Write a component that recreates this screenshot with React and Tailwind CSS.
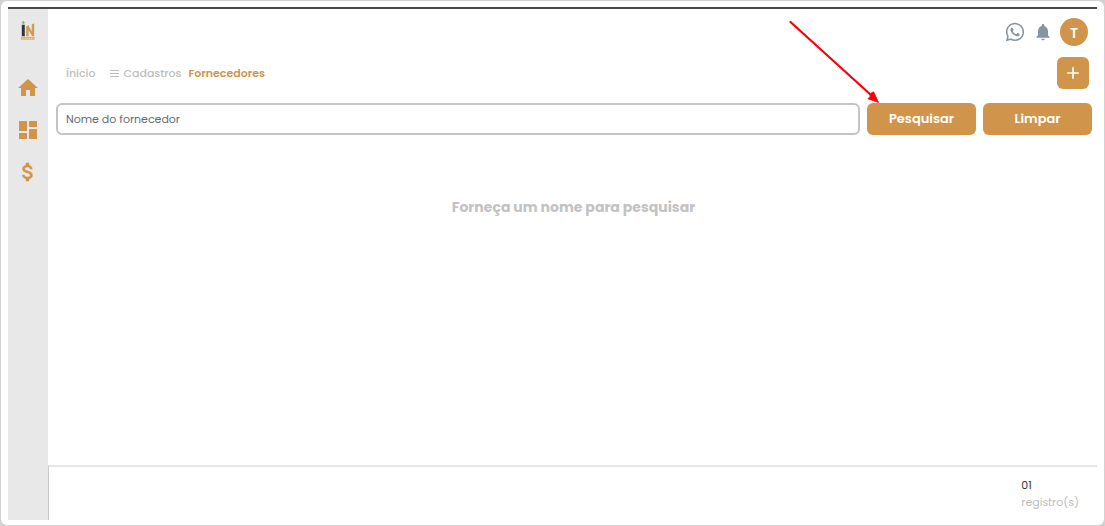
import { MdHome, MdDashboard, MdNotifications, MdWhatsapp, MdAdd } from "react-icons/md";

function Logo() {
  return (
    <svg viewBox="0 0 14 19" className="h-[19px] w-[14px]" aria-hidden="true">
      <path d="M2.3 0v3.2M0.8 1.6h3" stroke="#8fb583" strokeWidth="1.3" />
      <rect x="0.8" y="3.8" width="3" height="11.4" fill="#33343a" />
      <path d="M5.2 15.2V5.4L7.2 4L10.7 10.4V3.4L13.2 2.2V15.2H11.2L7.6 9.2V15.2z" fill="#cf9a55" />
      <rect x="0" y="15.9" width="13.6" height="2.8" fill="#d9ab70" />
      <path d="M1.4 17.3h11" stroke="#efdcc3" strokeWidth="0.9" strokeDasharray="1.4 0.7" />
    </svg>
  );
}

function Dollar({ className }) {
  return (
    <svg viewBox="0 0 24 24" className={className} fill="currentColor" stroke="currentColor" strokeWidth="0.5">
      <path d="M11.8 10.9c-2.27-.59-3-1.2-3-2.15 0-1.09 1.01-1.85 2.7-1.85 1.78 0 2.44.85 2.5 2.1h2.21c-.07-1.72-1.12-3.3-3.21-3.81V3h-3v2.16c-1.94.42-3.5 1.68-3.5 3.61 0 2.31 1.91 3.46 4.7 4.13 2.5.6 3 1.48 3 2.41 0 .69-.49 1.79-2.7 1.79-2.06 0-2.87-.92-2.98-2.1h-2.2c.12 2.19 1.76 3.42 3.68 3.83V21h3v-2.15c1.95-.37 3.5-1.5 3.5-3.55 0-2.84-2.43-3.81-4.7-4.4z" />
    </svg>
  );
}

function Sidebar() {
  const links = [
    { label: "Home", Icon: MdHome },
    { label: "Painel", Icon: MdDashboard },
    { label: "Financeiro", Icon: Dollar },
  ];
  return (
    <aside className="flex w-10 shrink-0 flex-col items-center bg-[#e8e8e8] pt-3">
      <Logo />
      <nav className="mt-9 flex flex-col gap-[18px]">
        {links.map(({ label, Icon }) => (
          <a key={label} href="#" aria-label={label} className="text-[#d0944a]">
            <Icon className="size-6" />
          </a>
        ))}
      </nav>
    </aside>
  );
}

function Arrow() {
  return (
    <svg
      viewBox="0 0 90 82"
      className="pointer-events-none absolute right-[97px] bottom-8 h-[82px] w-[90px]"
      aria-hidden="true"
    >
      <path d="M1.5 1L82 74" stroke="#fb0007" strokeWidth="2.2" strokeLinecap="round" />
      <path d="M89.5 81.5L79 77.8L81.6 74.9L80 73.4L84.6 70.8z" fill="#fb0007" stroke="#fb0007" strokeWidth="0.8" />
    </svg>
  );
}

const action =
  "h-8 w-[109px] rounded-md bg-[#d0944a] text-[13px] font-semibold text-white";

export default function App() {
  return (
    <div className="flex min-h-screen bg-[#d2d2d2] p-px font-['Poppins','Inter',sans-serif]">
      <div className="flex grow rounded-md bg-white px-[7px] pt-1.5 pb-[5px]">
        <div className="flex grow border-t-2 border-[#48484a]">
          <Sidebar />
          <div className="flex min-w-0 grow flex-col">
            <header className="flex items-center justify-end gap-[7px] pt-[9px] pr-[9px]">
              <a href="#" aria-label="WhatsApp" className="text-[#8594a1]">
                <MdWhatsapp className="size-[22px]" />
              </a>
              <button aria-label="Notificações" className="text-[#8594a1]">
                <MdNotifications className="size-5" />
              </button>
              <button className="size-7 rounded-full bg-[#d0944a] pt-0.5 text-sm font-semibold text-white">T</button>
            </header>

            <div className="mt-[11px] flex items-center justify-between pr-2 pl-[18px]">
              <nav className="flex items-center text-[11px] font-medium text-[#bdbdbd]">
                <a href="#">Ínicio</a>
                <a href="#" className="ml-[15px] flex items-center gap-1">
                  <svg viewBox="0 0 9 9" className="size-[9px]" stroke="currentColor" aria-hidden="true">
                    <path d="M0 1.5h9M0 4.5h9M0 7.5h9" strokeWidth="1" />
                  </svg>
                  Cadastros
                </a>
                <a href="#" className="ml-[7px] font-semibold text-[#d0944a]">Fornecedores</a>
              </nav>
              <button aria-label="Adicionar" className="flex size-8 items-center justify-center rounded-md bg-[#d0944a] text-white">
                <MdAdd className="size-5" />
              </button>
            </div>

            <form className="mt-3.5 flex gap-[7px] pr-[5px] pl-2" onSubmit={(e) => e.preventDefault()}>
              <input
                type="text"
                aria-label="Nome do fornecedor"
                placeholder="Nome do fornecedor"
                className="h-8 min-w-0 grow rounded-md border-2 border-[#c4c4c4] px-2 text-[11px] text-[#5f6c78] placeholder:text-[#5f6c78]"
              />
              <div className="relative">
                <button type="submit" className={action}>Pesquisar</button>
                <Arrow />
              </div>
              <button type="reset" className={action}>Limpar</button>
            </form>

            <main className="grow pt-[60px] pl-0.5 text-center">
              <h1 className="text-sm leading-6 font-bold text-[#c2c2c2]">Forneça um nome para pesquisar</h1>
            </main>

            <footer className="flex h-[55px] justify-end border-t-2 border-l border-t-[#e6e6e6] border-l-[#c8c8c8] pt-2.5 pr-[18px] text-[11px]">
              <div>
                <p className="leading-4 text-[#33343a]">01</p>
                <p className="leading-[18px] text-[#bdbdbd]">registro(s)</p>
              </div>
            </footer>
          </div>
        </div>
      </div>
    </div>
  );
}
